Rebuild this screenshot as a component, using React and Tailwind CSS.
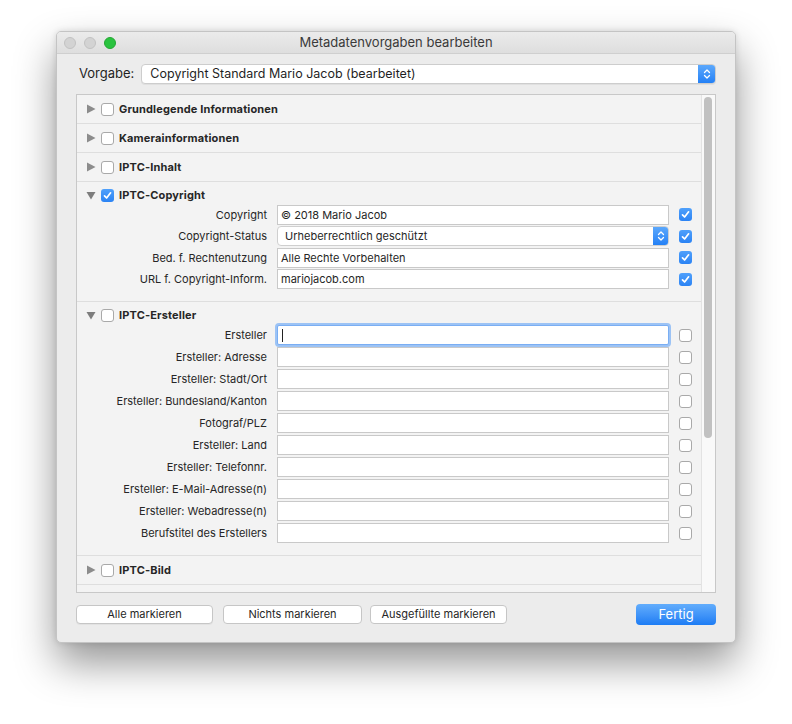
import React from "react";

const font = { fontFamily: "Inter, 'Helvetica Neue', Arial, sans-serif" };

function Tri({ open }) {
  return open ? (
    <svg width="10" height="10" viewBox="0 0 10 10" className="shrink-0">
      <path d="M0.5 2 L9.5 2 L5 9.5 Z" fill="#7d7d7d" />
    </svg>
  ) : (
    <svg width="10" height="10" viewBox="0 0 10 10" className="shrink-0">
      <path d="M1 0.5 L9.5 5 L1 9.5 Z" fill="#8c8c8c" />
    </svg>
  );
}

function Check({ on }) {
  if (on)
    return (
      <div className="w-[13px] h-[13px] rounded-[3px] bg-gradient-to-b from-[#4fa0fb] to-[#2b83f4] flex items-center justify-center shrink-0">
        <svg width="9" height="9" viewBox="0 0 9 9">
          <path d="M1.5 4.8 L3.6 7 L7.6 1.8" stroke="white" strokeWidth="1.7" fill="none" strokeLinecap="round" strokeLinejoin="round" />
        </svg>
      </div>
    );
  return <div className="w-[13px] h-[13px] rounded-[3px] bg-white border border-[#a9a9a9] shrink-0" />;
}

function Stepper({ w = "w-[16px]", h = "h-[20px]" }) {
  return (
    <div className={`${w} ${h} rounded-r-[4px] bg-gradient-to-b from-[#5eaafc] to-[#1f7ef5] flex items-center justify-center`}>
      <svg width="8" height="12" viewBox="0 0 8 12">
        <path d="M1.5 4.5 L4 2 L6.5 4.5" stroke="white" strokeWidth="1.3" fill="none" strokeLinecap="round" strokeLinejoin="round" />
        <path d="M1.5 7.5 L4 10 L6.5 7.5" stroke="white" strokeWidth="1.3" fill="none" strokeLinecap="round" strokeLinejoin="round" />
      </svg>
    </div>
  );
}

function SectionHeader({ title, open, checked }) {
  return (
    <div className="flex items-center h-[16px] pl-[9px] shrink-0">
      <Tri open={open} />
      <div className="ml-[5px]">
        <Check on={checked} />
      </div>
      {title && (
        <span className="ml-[5px] text-[11px] font-bold text-[#262626] tracking-[0.15px]">{title}</span>
      )}
    </div>
  );
}

function Collapsed({ title }) {
  return (
    <div className="h-[29px] shrink-0 border-b border-[#dedede] flex items-center">
      <SectionHeader title={title} />
    </div>
  );
}

function Field({ label, value, checked, popup, focus, h = "h-[22px]" }) {
  return (
    <div className={`${h} shrink-0 flex items-center`}>
      <div className="w-[190px] text-right text-[11px] text-[#262626]">{label}</div>
      <div className="ml-[10px] w-[392px] h-[20px] relative">
        {popup ? (
          <div className="h-[20px] flex bg-white border border-[#cfcfcf] rounded-[4px] overflow-hidden">
            <div className="flex-1 pl-[7px] text-[11px] text-[#262626] leading-[18px]">{value}</div>
            <div className="-mt-px -mr-px">
              <Stepper h="h-[20px]" />
            </div>
          </div>
        ) : focus ? (
          <div className="h-[20px] bg-white border border-[#7aaef3] ring-[2px] ring-[#9cc3f5] rounded-[2px] flex items-center pl-[4px]">
            <div className="w-px h-[13px] bg-[#222]" />
          </div>
        ) : (
          <div className="h-[20px] bg-white border border-[#c9c9c9] pl-[3px] text-[11px] text-[#262626] leading-[18px]">
            {value}
          </div>
        )}
      </div>
      <div className="ml-[10px]">
        <Check on={checked} />
      </div>
    </div>
  );
}

export default function App() {
  const ersteller = [
    "Ersteller",
    "Ersteller: Adresse",
    "Ersteller: Stadt/Ort",
    "Ersteller: Bundesland/Kanton",
    "Fotograf/PLZ",
    "Ersteller: Land",
    "Ersteller: Telefonnr.",
    "Ersteller: E-Mail-Adresse(n)",
    "Ersteller: Webadresse(n)",
    "Berufstitel des Erstellers",
  ];
  return (
    <div className="min-h-[724px] bg-white pt-[31px] pl-[56px]" style={font}>
      <div className="w-[680px] h-[612px] rounded-[5px] bg-[#ececec] border border-[#c4c4c4] shadow-[0_20px_40px_rgba(0,0,0,0.42),0_0_6px_rgba(0,0,0,0.12)] overflow-hidden flex flex-col">
        {/* title bar */}
        <div className="h-[22px] shrink-0 bg-gradient-to-b from-[#ebebeb] to-[#dedede] border-b border-[#cfcfcf] flex items-center relative">
          <div className="flex items-center gap-[8px] pl-[7px]">
            <div className="w-[12px] h-[12px] rounded-full bg-[#d3d3d3] border border-[#c2c2c2]" />
            <div className="w-[12px] h-[12px] rounded-full bg-[#d3d3d3] border border-[#c2c2c2]" />
            <div className="w-[12px] h-[12px] rounded-full bg-[#2ac33f] border border-[#24a733]" />
          </div>
          <div className="absolute inset-0 flex items-center justify-center text-[13px] text-[#3a3a3a] pointer-events-none">
            Metadatenvorgaben bearbeiten
          </div>
        </div>

        {/* body */}
        <div className="flex-1 flex flex-col px-[19px] pt-[10px]">
          <div className="flex items-center h-[20px] shrink-0">
            <span className="text-[13px] text-[#1f1f1f] ml-[3px]">Vorgabe:</span>
            <div className="ml-[7px] flex-1 h-[20px] flex bg-white border border-[#cdcdcd] rounded-[4px] overflow-hidden shadow-[0_1px_0_rgba(0,0,0,0.05)]">
              <div className="flex-1 pl-[8px] text-[12.5px] text-[#1f1f1f] leading-[18px]">
                Copyright Standard Mario Jacob (bearbeitet)
              </div>
              <div className="-mt-px -mr-px">
                <Stepper w="w-[18px]" h="h-[20px]" />
              </div>
            </div>
          </div>

          {/* panel */}
          <div className="mt-[10px] h-[499px] shrink-0 border border-[#c8c8c8] bg-[#f3f3f3] flex overflow-hidden">
            <div className="w-[624px] flex flex-col overflow-hidden">
              <Collapsed title="Grundlegende Informationen" />
              <Collapsed title="Kamerainformationen" />
              <Collapsed title="IPTC-Inhalt" />
              <div className="shrink-0 border-b border-[#dedede] pt-[5px] pb-[11px]">
                <SectionHeader title="IPTC-Copyright" open checked />
                <div className="mt-[1px]">
                  <Field h="h-[21.5px]" label="Copyright" value="© 2018 Mario Jacob" checked />
                  <Field h="h-[21.5px]" label="Copyright-Status" value="Urheberrechtlich geschützt" checked popup />
                  <Field h="h-[21.5px]" label="Bed. f. Rechtenutzung" value="Alle Rechte Vorbehalten" checked />
                  <Field h="h-[21.5px]" label="URL f. Copyright-Inform." value="mariojacob.com" checked />
                </div>
              </div>
              <div className="shrink-0 border-b border-[#dedede] pt-[5px] pb-[11px]">
                <SectionHeader title="IPTC-Ersteller" open />
                <div className="mt-[1px]">
                  {ersteller.map((l, i) => (
                    <Field key={l} label={l} value="" focus={i === 0} />
                  ))}
                </div>
              </div>
              <Collapsed title="IPTC-Bild" />
              <div className="shrink-0 pt-[5px]">
                <SectionHeader />
              </div>
            </div>
            <div className="flex-1 bg-[#f9f9f9] border-l border-[#e3e3e3] pt-[2px] pl-[2px]">
              <div className="w-[8px] h-[341px] rounded-full bg-[#c1c1c1]" />
            </div>
          </div>

          {/* buttons */}
          <div className="mt-[11px] flex items-center shrink-0">
            <button className="w-[137px] h-[19px] bg-white border border-[#c6c6c6] rounded-[4px] text-[11px] text-[#262626] shadow-[0_1px_0_rgba(0,0,0,0.04)]">
              Alle markieren
            </button>
            <button className="ml-[10px] w-[139px] h-[19px] bg-white border border-[#c6c6c6] rounded-[4px] text-[11px] text-[#262626]">
              Nichts markieren
            </button>
            <button className="ml-[8px] w-[137px] h-[19px] bg-white border border-[#c6c6c6] rounded-[4px] text-[11px] text-[#262626]">
              Ausgefüllte markieren
            </button>
            <div className="flex-1" />
            <button className="w-[80px] h-[21px] rounded-[4px] bg-gradient-to-b from-[#62adfc] to-[#1c7cf4] text-white text-[13px]">
              Fertig
            </button>
          </div>
        </div>
      </div>
    </div>
  );
}
